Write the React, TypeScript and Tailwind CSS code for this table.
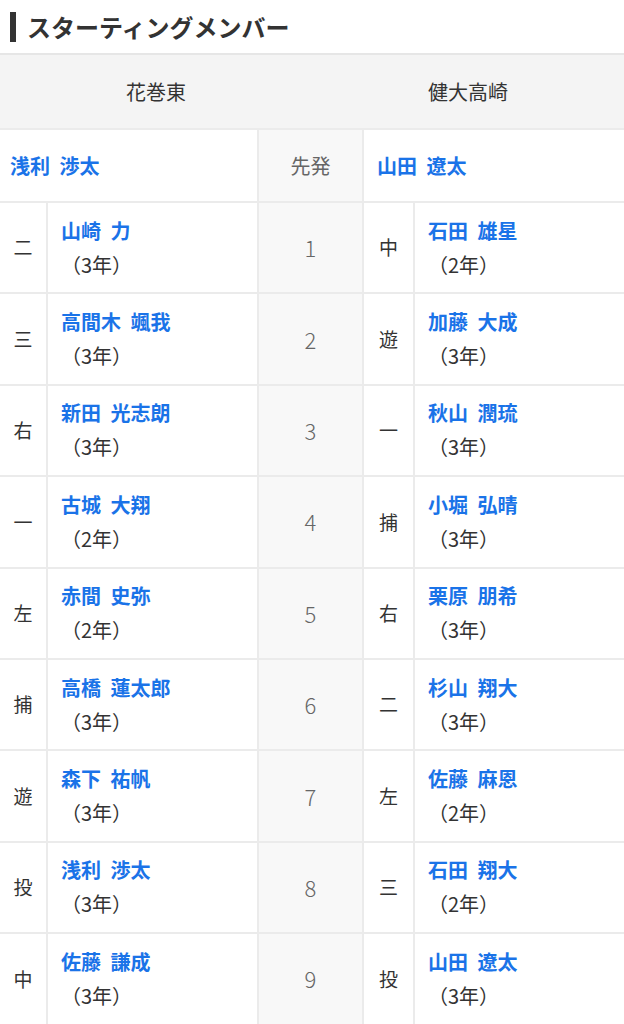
import React from 'react'

type Player = { pos: string; name: string; grade: string }

const home: Player[] = [
    { pos: '二', name: '山崎 力', grade: '3' },
    { pos: '三', name: '高間木 颯我', grade: '3' },
    { pos: '右', name: '新田 光志朗', grade: '3' },
    { pos: '一', name: '古城 大翔', grade: '2' },
    { pos: '左', name: '赤間 史弥', grade: '2' },
    { pos: '捕', name: '高橋 蓮太郎', grade: '3' },
    { pos: '遊', name: '森下 祐帆', grade: '3' },
    { pos: '投', name: '浅利 渉太', grade: '3' },
    { pos: '中', name: '佐藤 謙成', grade: '3' },
]

const away: Player[] = [
    { pos: '中', name: '石田 雄星', grade: '2' },
    { pos: '遊', name: '加藤 大成', grade: '3' },
    { pos: '一', name: '秋山 潤琉', grade: '3' },
    { pos: '捕', name: '小堀 弘晴', grade: '3' },
    { pos: '右', name: '栗原 朋希', grade: '3' },
    { pos: '二', name: '杉山 翔大', grade: '3' },
    { pos: '左', name: '佐藤 麻恩', grade: '2' },
    { pos: '三', name: '石田 翔大', grade: '2' },
    { pos: '投', name: '山田 遼太', grade: '3' },
]

const NameCell = ({ p }: { p: Player }) => (
    <div className="bg-white flex flex-col justify-center pl-[13px] h-[89.4px]">
        <p className="text-[#1a73e8] font-bold text-[20px] leading-[34px] [word-spacing:5px]">{p.name}</p>
        <p className="text-[#333] text-[20px] leading-[34px]">（{p.grade}年）</p>
    </div>
)

const App = () => {
    return (
        <div className="w-[624px] bg-white" style={{ fontFamily: '"Noto Sans CJK JP", "Noto Sans", sans-serif' }}>
            <div className="h-[53px] flex items-center pl-[10px] gap-[11px]">
                <div className="w-[6px] h-[30px] bg-[#333]"></div>
                <h2 className="text-[24px] font-bold text-[#333] leading-none">スターティングメンバー</h2>
            </div>
            <div className="border-t-2 border-[#e6e6e6] bg-[#ebebeb] grid grid-cols-[46px_209px_103px_49px_1fr] gap-[2px]">
                <div className="col-span-5 grid grid-cols-2 bg-[#f4f4f4] h-[73px] text-[20px] text-[#333]">
                    <div className="flex items-center justify-center">花巻東</div>
                    <div className="flex items-center justify-center">健大高崎</div>
                </div>

                <div className="col-span-2 bg-white h-[71px] flex items-center pl-[10px] text-[#1a73e8] font-bold text-[20px] [word-spacing:5px]">浅利 渉太</div>
                <div className="bg-[#f8f8f8] flex items-center justify-center text-[20px] text-[#666]">先発</div>
                <div className="col-span-2 bg-white flex items-center pl-[13px] text-[#1a73e8] font-bold text-[20px] [word-spacing:5px]">山田 遼太</div>

                {home.map((p, i) => (
                    <React.Fragment key={i}>
                        <div className="bg-white flex items-center justify-center text-[19px] text-[#333]">{p.pos}</div>
                        <NameCell p={p} />
                        <div className="bg-[#f8f8f8] flex items-center justify-center text-[22px] text-[#666] font-light">{i + 1}</div>
                        <div className="bg-white flex items-center justify-center text-[19px] text-[#333]">{away[i].pos}</div>
                        <NameCell p={away[i]} />
                    </React.Fragment>
                ))}
            </div>
        </div>
    )
}

export default App
